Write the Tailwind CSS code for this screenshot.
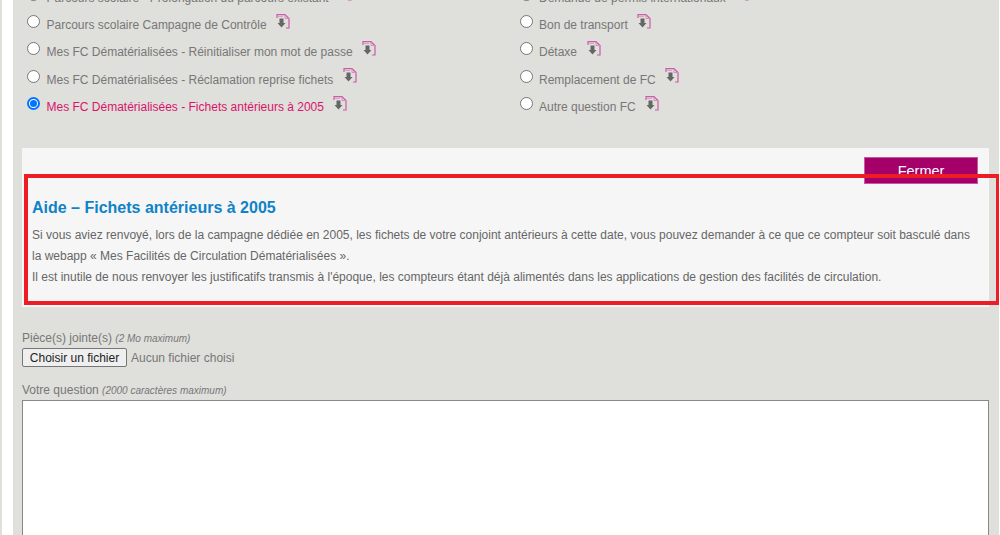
<!DOCTYPE html>
<html lang="fr">
<head>
    <meta charset="UTF-8">
    <title>Aide</title>
    <script src="https://cdn.jsdelivr.net/npm/@tailwindcss/browser@4"></script>
</head>
<body class="bg-white font-['Liberation_Sans',Arial,sans-serif]">
    <div class="relative h-[535px] w-[1000px] overflow-hidden">
        <div class="absolute left-0 top-0 h-full w-[2px] bg-[#dfdfdb]"></div>
        <div class="flow-root h-[535px] w-[986px] ml-[13px] bg-[#dfdfdb] pl-[9px] pr-[10px] text-[12px] text-[#777]">

            <!-- Choix du motif -->
            <div class="grid grid-cols-[497.5px_1fr] h-[160px] -mt-[16px]">
                <div class="flex flex-col pl-[5px]">
                    <div class="flex items-center h-[27.4px] gap-[6.5px]"><span class="size-[13px] rounded-full border border-[#767676] bg-white -mt-[7px]"></span><span>Parcours scolaire - Prolongation du parcours existant</span><svg class="ml-[3px] -mt-[8px]" width="14" height="15"><use href="#doc"/></svg></div>
                    <div class="flex items-center h-[27.4px] gap-[6.5px]"><span class="size-[13px] rounded-full border border-[#767676] bg-white -mt-[7px]"></span><span>Parcours scolaire Campagne de Contrôle</span><svg class="ml-[3px] -mt-[8px]" width="14" height="15"><use href="#doc"/></svg></div>
                    <div class="flex items-center h-[27.4px] gap-[6.5px]"><span class="size-[13px] rounded-full border border-[#767676] bg-white -mt-[7px]"></span><span>Mes FC Dématérialisées - Réinitialiser mon mot de passe</span><svg class="ml-[3px] -mt-[8px]" width="14" height="15"><use href="#doc"/></svg></div>
                    <div class="flex items-center h-[27.4px] gap-[6.5px]"><span class="size-[13px] rounded-full border border-[#767676] bg-white -mt-[7px]"></span><span>Mes FC Dématérialisées - Réclamation reprise fichets</span><svg class="ml-[3px] -mt-[8px]" width="14" height="15"><use href="#doc"/></svg></div>
                    <div class="flex items-center h-[27.4px] gap-[6.5px] text-[#d9146b]"><span class="flex size-[13px] items-center justify-center rounded-full border-2 border-[#0075ff] bg-white -mt-[7px]"><span class="size-[7px] rounded-full bg-[#0075ff]"></span></span><span>Mes FC Dématérialisées - Fichets antérieurs à 2005</span><svg class="ml-[3px] -mt-[8px]" width="14" height="15"><use href="#doc"/></svg></div>
                </div>
                <div class="flex flex-col">
                    <div class="flex items-center h-[27.4px] gap-[6.5px]"><span class="size-[13px] rounded-full border border-[#767676] bg-white -mt-[7px]"></span><span>Demande de permis internationaux</span><svg class="ml-[3px] -mt-[8px]" width="14" height="15"><use href="#doc"/></svg></div>
                    <div class="flex items-center h-[27.4px] gap-[6.5px]"><span class="size-[13px] rounded-full border border-[#767676] bg-white -mt-[7px]"></span><span>Bon de transport</span><svg class="ml-[3px] -mt-[8px]" width="14" height="15"><use href="#doc"/></svg></div>
                    <div class="flex items-center h-[27.4px] gap-[6.5px]"><span class="size-[13px] rounded-full border border-[#767676] bg-white -mt-[7px]"></span><span>Détaxe</span><svg class="ml-[3px] -mt-[8px]" width="14" height="15"><use href="#doc"/></svg></div>
                    <div class="flex items-center h-[27.4px] gap-[6.5px]"><span class="size-[13px] rounded-full border border-[#767676] bg-white -mt-[7px]"></span><span>Remplacement de FC</span><svg class="ml-[3px] -mt-[8px]" width="14" height="15"><use href="#doc"/></svg></div>
                    <div class="flex items-center h-[27.4px] gap-[6.5px]"><span class="size-[13px] rounded-full border border-[#767676] bg-white -mt-[7px]"></span><span>Autre question FC</span><svg class="ml-[3px] -mt-[8px]" width="14" height="15"><use href="#doc"/></svg></div>
                </div>
            </div>

            <!-- Aide -->
            <div class="relative mt-[4px] h-[159px] bg-[#f6f6f6] pl-[10px] pr-[16px] pt-[50px]">
                <button class="absolute right-[11px] top-[9px] h-[27px] w-[114px] border border-[#c65aa0] bg-[#a50069] text-[14.5px] leading-[20px] text-white">Fermer</button>
                <h2 class="text-[16px] font-bold leading-[20px] text-[#0f82c8]">Aide – Fichets antérieurs à 2005</h2>
                <p class="mt-[7px] text-[12px] leading-[21px] text-[#666]">Si vous aviez renvoyé, lors de la campagne dédiée en 2005, les fichets de votre conjoint antérieurs à cette date, vous pouvez demander à ce que ce compteur soit basculé dans la webapp « Mes Facilités de Circulation Dématérialisées ».<br>Il est inutile de nous renvoyer les justificatifs transmis à l'époque, les compteurs étant déjà alimentés dans les applications de gestion des facilités de circulation.</p>
            </div>

            <!-- Pièce jointe -->
            <div class="mt-[23px] leading-[16px]">Pièce(s) jointe(s) <em class="text-[10px]">(2 Mo maximum)</em></div>
            <div class="mt-[1px] flex items-center gap-[4px]">
                <button class="h-[19px] w-[105px] rounded-[2px] border border-[#767676] bg-[#efefef] text-[12px] leading-[16px] text-[#222]">Choisir un fichier</button>
                <span>Aucun fichier choisi</span>
            </div>

            <div class="mt-[15px] leading-[16px]">Votre question <em class="text-[10px]">(2000 caractères maximum)</em></div>
            <div class="mt-[1px] h-[200px] border border-[#888] bg-white"></div>
        </div>

        <!-- Encadré rouge -->
        <div class="absolute left-[24px] top-[174px] h-[131px] w-[975px] border-4 border-r-[3px] border-[#ee1c25]"></div>

        <svg class="hidden">
            <symbol id="doc" viewBox="0 0 14 15">
                <path d="M1 4V.7H9L13 4.5V14H10" fill="none" stroke="#cc5ba8" stroke-width="1.2"/>
                <path d="M9 .7V4.5H13" fill="none" stroke="#d98cc2" stroke-width="1"/>
                <path d="M2 2.5H7" stroke="#dba0c8" stroke-width="1"/>
                <path d="M3.5 4.5H7.5V9H9.5L5.5 13.5L1.5 9H3.5Z" fill="#666"/>
            </symbol>
        </svg>
    </div>
</body>
</html>
